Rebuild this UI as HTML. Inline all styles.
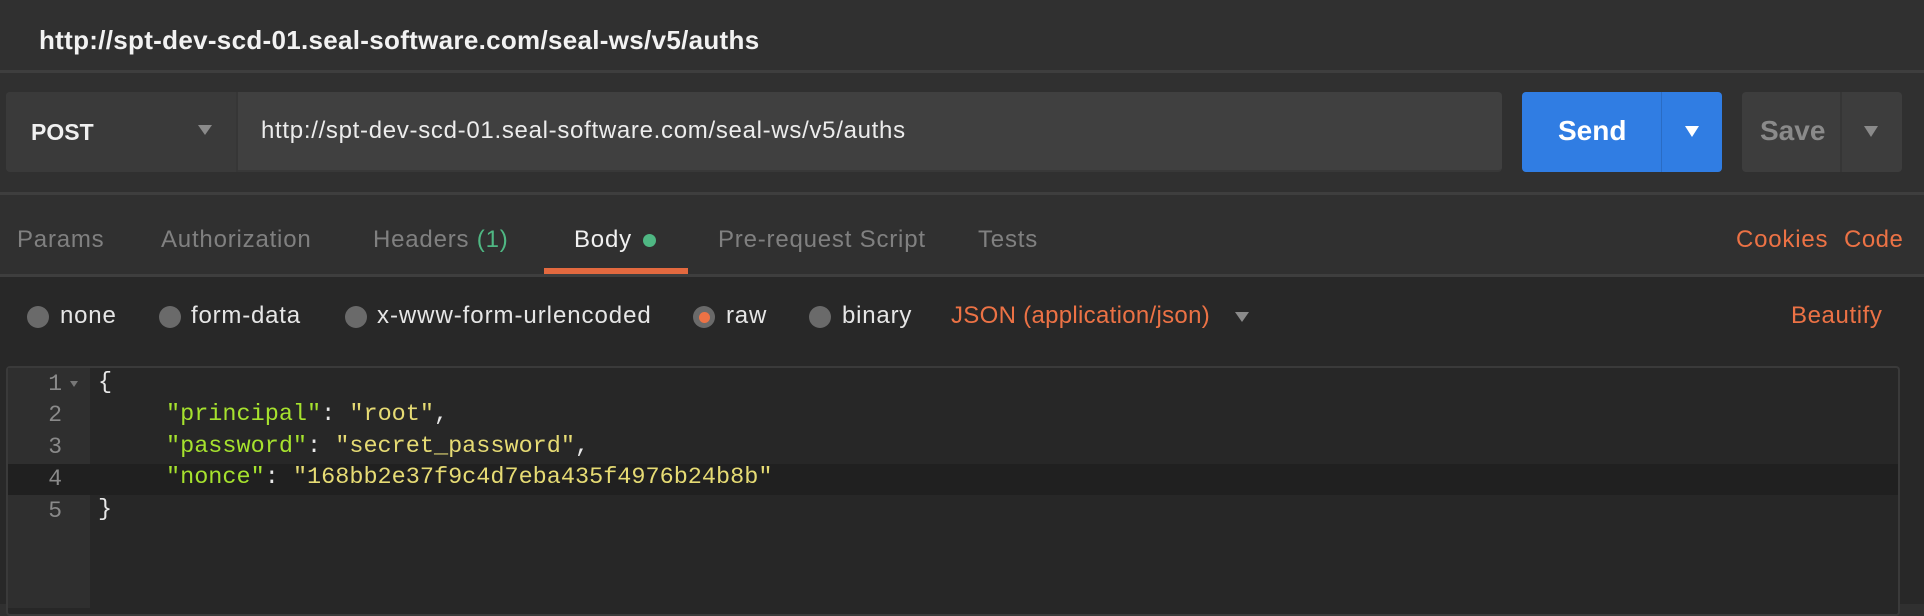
<!DOCTYPE html>
<html><head><meta charset="utf-8"><style>
*{margin:0;padding:0;box-sizing:border-box}
body{width:1924px;height:604px;background:#303030;font-family:"Liberation Sans",sans-serif;position:relative;overflow:hidden;color:#ddd}
.a{position:absolute;white-space:nowrap}
.hr{position:absolute;left:0;width:1924px;height:3px;background:#3e3e3e}
.tab{position:absolute;top:226px;font-size:24px;letter-spacing:0.8px;color:#808080;white-space:nowrap}
.rd{position:absolute;top:306px;width:22px;height:22px;border-radius:50%;background:#6a6a6a}
.rl{position:absolute;top:302px;font-size:24px;letter-spacing:0.8px;color:#e6e6e6;white-space:nowrap}
.ln{position:absolute;left:0;width:90px;text-align:right;padding-right:28px;font-family:"Liberation Mono",monospace;font-size:23px;color:#8a8a8a}
.code{position:absolute;font-family:"Liberation Mono",monospace;font-size:23.5px;color:#e8e8e8;white-space:pre}
.k{color:#a6e22e}.s{color:#e6db74}
</style></head><body>
<div class="a" style="left:39px;top:25px;font-size:26px;letter-spacing:0.3px;font-weight:bold;color:#f2f2f2">http://spt-dev-scd-01.seal-software.com/seal-ws/v5/auths</div>
<div class="hr" style="top:70px"></div>
<div class="a" style="left:6px;top:92px;width:1496px;height:80px;background:#404040;border-radius:4px;border-bottom:2px solid #383838"></div>
<div class="a" style="left:6px;top:92px;width:232px;height:80px;background:#3a3a3a;border-radius:4px 0 0 4px;border-right:2px solid #363636"></div>
<div class="a" style="left:31px;top:119px;font-size:23px;font-weight:bold;color:#f0f0f0">POST</div>
<div class="a" style="left:198px;top:125px;width:0;height:0;border-left:7px solid transparent;border-right:7px solid transparent;border-top:10px solid #8a8a8a"></div>
<div class="a" style="left:261px;top:117px;font-size:24px;letter-spacing:0.7px;color:#ececec">http://spt-dev-scd-01.seal-software.com/seal-ws/v5/auths</div>
<div class="a" style="left:1522px;top:92px;width:200px;height:80px;background:#307de3;border-radius:4px"></div>
<div class="a" style="left:1661px;top:92px;width:1px;height:80px;background:#2a6cc4"></div>
<div class="a" style="left:1558px;top:115px;font-size:28px;font-weight:bold;color:#fff">Send</div>
<div class="a" style="left:1685px;top:126px;border-left:7px solid transparent;border-right:7px solid transparent;border-top:11px solid #fff"></div>
<div class="a" style="left:1742px;top:92px;width:160px;height:80px;background:#3d3d3d;border-radius:4px"></div>
<div class="a" style="left:1840px;top:92px;width:2px;height:80px;background:#363636"></div>
<div class="a" style="left:1760px;top:115px;font-size:28px;font-weight:bold;color:#8a8a8a">Save</div>
<div class="a" style="left:1864px;top:126px;border-left:7px solid transparent;border-right:7px solid transparent;border-top:11px solid #8a8a8a"></div>
<div class="hr" style="top:192px"></div>
<div class="tab" style="left:17px">Params</div>
<div class="tab" style="left:161px">Authorization</div>
<div class="tab" style="left:373px">Headers <span style="color:#4fb783">(1)</span></div>
<div class="tab" style="left:574px;color:#f0f0f0">Body</div>
<div class="a" style="left:643px;top:234px;width:13px;height:13px;border-radius:50%;background:#4fb783"></div>
<div class="tab" style="left:718px">Pre-request Script</div>
<div class="tab" style="left:978px">Tests</div>
<div class="tab" style="left:1736px;color:#ec7245">Cookies</div>
<div class="tab" style="left:1844px;letter-spacing:0.5px;color:#ec7245">Code</div>
<div class="a" style="left:544px;top:268px;width:144px;height:6px;background:#e3693f"></div>
<div class="hr" style="top:274px"></div>
<div class="a" style="left:0;top:277px;width:1924px;height:327px;background:#282828"></div>
<div class="rd" style="left:27px"></div><div class="rl" style="left:60px">none</div>
<div class="rd" style="left:159px"></div><div class="rl" style="left:191px">form-data</div>
<div class="rd" style="left:345px"></div><div class="rl" style="left:377px;letter-spacing:0.95px">x-www-form-urlencoded</div>
<div class="rd" style="left:693px"></div><div class="a" style="left:699px;top:312px;width:11px;height:11px;border-radius:50%;background:#ec7245"></div><div class="rl" style="left:726px">raw</div>
<div class="rd" style="left:809px"></div><div class="rl" style="left:842px">binary</div>
<div class="rl" style="left:951px;letter-spacing:0.3px;color:#ec7245">JSON (application/json)</div>
<div class="a" style="left:1235px;top:312px;border-left:7px solid transparent;border-right:7px solid transparent;border-top:10px solid #8a8a8a"></div>
<div class="rl" style="left:1791px;letter-spacing:0.6px;color:#ec7245">Beautify</div>
<div class="a" style="left:6px;top:366px;width:1894px;height:250px;background:#272727;border:2px solid #3a3a3a;border-radius:4px"></div>
<div class="a" style="left:8px;top:368px;width:82px;height:240px;background:#2f2f2f"></div>
<div class="a" style="left:8px;top:464px;width:1890px;height:31px;background:#202020"></div>
<div class="ln" style="top:371px">1</div>
<div class="a" style="left:70px;top:381px;border-left:4px solid transparent;border-right:4px solid transparent;border-top:6px solid #777"></div>
<div class="ln" style="top:402px">2</div>
<div class="ln" style="top:434px">3</div>
<div class="ln" style="top:466px">4</div>
<div class="ln" style="top:498px">5</div>
<div class="code" style="left:98px;top:369px">{</div>
<div class="code" style="left:166px;top:401px"><span class="k">"principal"</span>: <span class="s">"root"</span>,</div>
<div class="code" style="left:166px;top:433px"><span class="k">"password"</span>: <span class="s">"secret_password"</span>,</div>
<div class="code" style="left:166px;top:464px"><span class="k">"nonce"</span>: <span class="s">"168bb2e37f9c4d7eba435f4976b24b8b"</span></div>
<div class="code" style="left:98px;top:496px">}</div>
</body></html>
